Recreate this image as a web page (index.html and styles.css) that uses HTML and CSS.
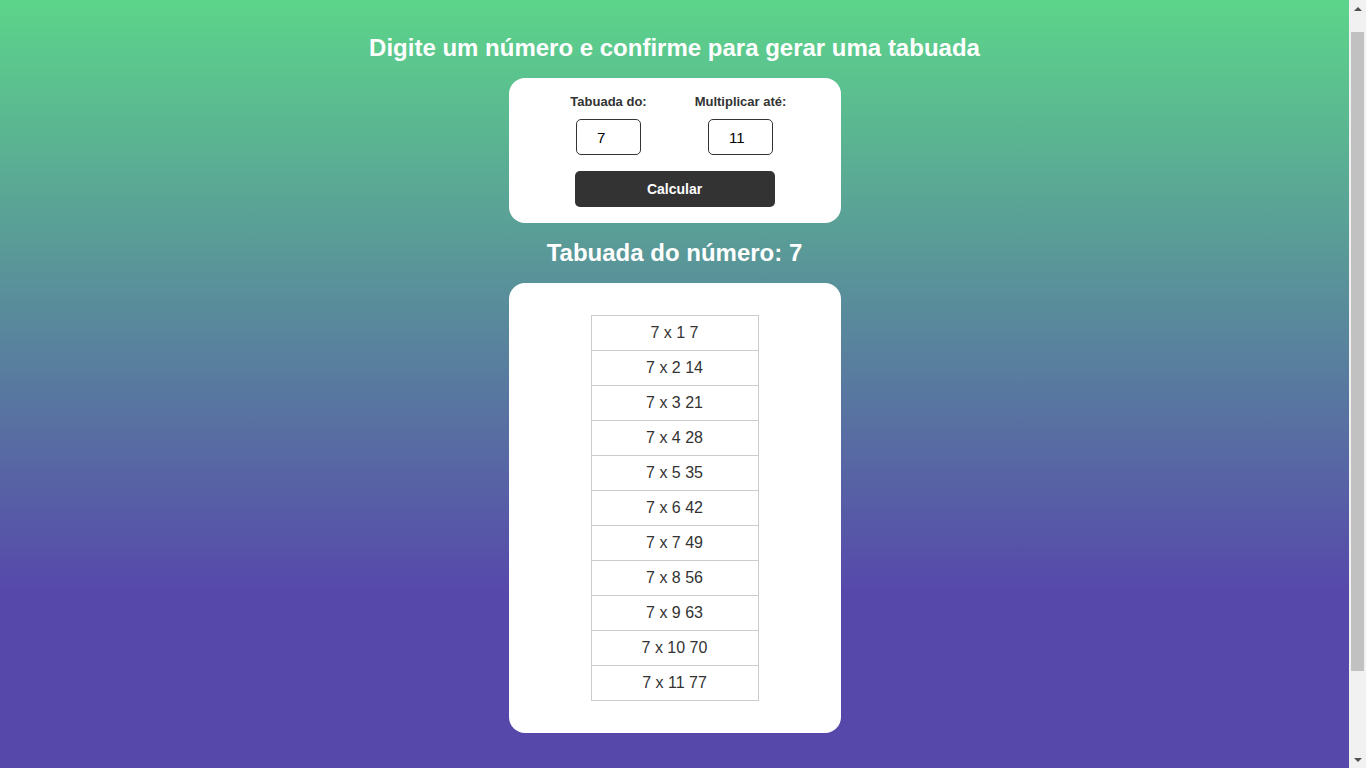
FILE: index.html
```html
<!DOCTYPE html>
<html lang="pt-BR">
<head>
<meta charset="UTF-8">
<title>Tabuada</title>
<link rel="stylesheet" href="styles.css">
</head>
<body>
<main class="page">
  <h1 class="title">Digite um número e confirme para gerar uma tabuada</h1>
  <section class="card form-card">
    <div class="fields">
      <div class="field">
        <label class="field-label" for="num">Tabuada do:</label>
        <input class="field-input" id="num" type="text" value="7">
      </div>
      <div class="field">
        <label class="field-label" for="ate">Multiplicar até:</label>
        <input class="field-input" id="ate" type="text" value="11">
      </div>
    </div>
    <button class="btn" type="button">Calcular</button>
  </section>
  <h2 class="subtitle">Tabuada do número: 7</h2>
  <section class="card result-card">
    <table class="table">
      <tbody>
        <tr><td>7 x 1 7</td></tr>
        <tr><td>7 x 2 14</td></tr>
        <tr><td>7 x 3 21</td></tr>
        <tr><td>7 x 4 28</td></tr>
        <tr><td>7 x 5 35</td></tr>
        <tr><td>7 x 6 42</td></tr>
        <tr><td>7 x 7 49</td></tr>
        <tr><td>7 x 8 56</td></tr>
        <tr><td>7 x 9 63</td></tr>
        <tr><td>7 x 10 70</td></tr>
        <tr><td>7 x 11 77</td></tr>
      </tbody>
    </table>
  </section>
</main>
<aside class="scrollbar" aria-hidden="true">
  <div class="sb-btn"><span class="sb-arrow sb-up"></span></div>
  <div class="sb-track"><div class="sb-thumb"></div></div>
  <div class="sb-btn"><span class="sb-arrow sb-down"></span></div>
</aside>
</body>
</html>
```

FILE: styles.css
```css
html {
  background: linear-gradient(to bottom, #5cd58a 0px, #5648ab 592px) no-repeat;
  background-color: #5648ab;
}

body {
  margin: 0;
  font-family: "Liberation Sans", Arial, sans-serif;
  color: #333;
  display: flex;
  align-items: flex-start;
}

.page {
  flex: 1;
  display: flex;
  flex-direction: column;
  align-items: center;
  padding: 34px 0 35px;
}

/* scrollbar column */
.scrollbar {
  flex: none;
  width: 17px;
  height: 768px;
  background: #f1f1f1;
  display: flex;
  flex-direction: column;
}

.sb-btn {
  height: 17px;
  display: flex;
  align-items: center;
  justify-content: center;
}

.sb-arrow {
  width: 0;
  height: 0;
  border-left: 4px solid transparent;
  border-right: 4px solid transparent;
}

.sb-up {
  border-bottom: 4px solid #505050;
}

.sb-down {
  border-top: 4px solid #505050;
}

.sb-track {
  flex: 1;
  padding: 15px 2px 0;
}

.sb-thumb {
  height: 639px;
  background: #c1c1c1;
}

.title {
  margin: 0 0 16px;
  font-size: 24px;
  line-height: 28px;
  font-weight: bold;
  color: #fff;
}

.subtitle {
  margin: 16px 0;
  font-size: 24px;
  line-height: 28px;
  font-weight: bold;
  color: #fff;
}

.card {
  background: #fff;
  border-radius: 16px;
  width: 300px;
  padding: 16px;
  display: flex;
  flex-direction: column;
  align-items: center;
}

.result-card {
  padding: 32px 16px;
}

.fields {
  display: flex;
  gap: 32px;
}

.field {
  width: 100px;
  display: flex;
  flex-direction: column;
  align-items: center;
}

.field-label {
  font-size: 13px;
  line-height: 15px;
  font-weight: bold;
  color: #333;
  margin-bottom: 10px;
  white-space: nowrap;
}

.field-input {
  box-sizing: border-box;
  width: 65px;
  height: 36px;
  border: 1px solid #333;
  border-radius: 5px;
  padding: 0 20px;
  font-family: "Liberation Sans", Arial, sans-serif;
  font-size: 15px;
  color: #000;
  background: #fff;
  outline: none;
}

.btn {
  margin-top: 16px;
  width: 200px;
  height: 36px;
  border: 0;
  border-radius: 5px;
  background: #333;
  color: #fff;
  font-family: "Liberation Sans", Arial, sans-serif;
  font-size: 14px;
  font-weight: bold;
}

.table {
  width: 168px;
  border-collapse: collapse;
}

.table td {
  border: 1px solid #ccc;
  padding: 8px;
  font-size: 16px;
  line-height: 18px;
  text-align: center;
  color: #333;
}
```
